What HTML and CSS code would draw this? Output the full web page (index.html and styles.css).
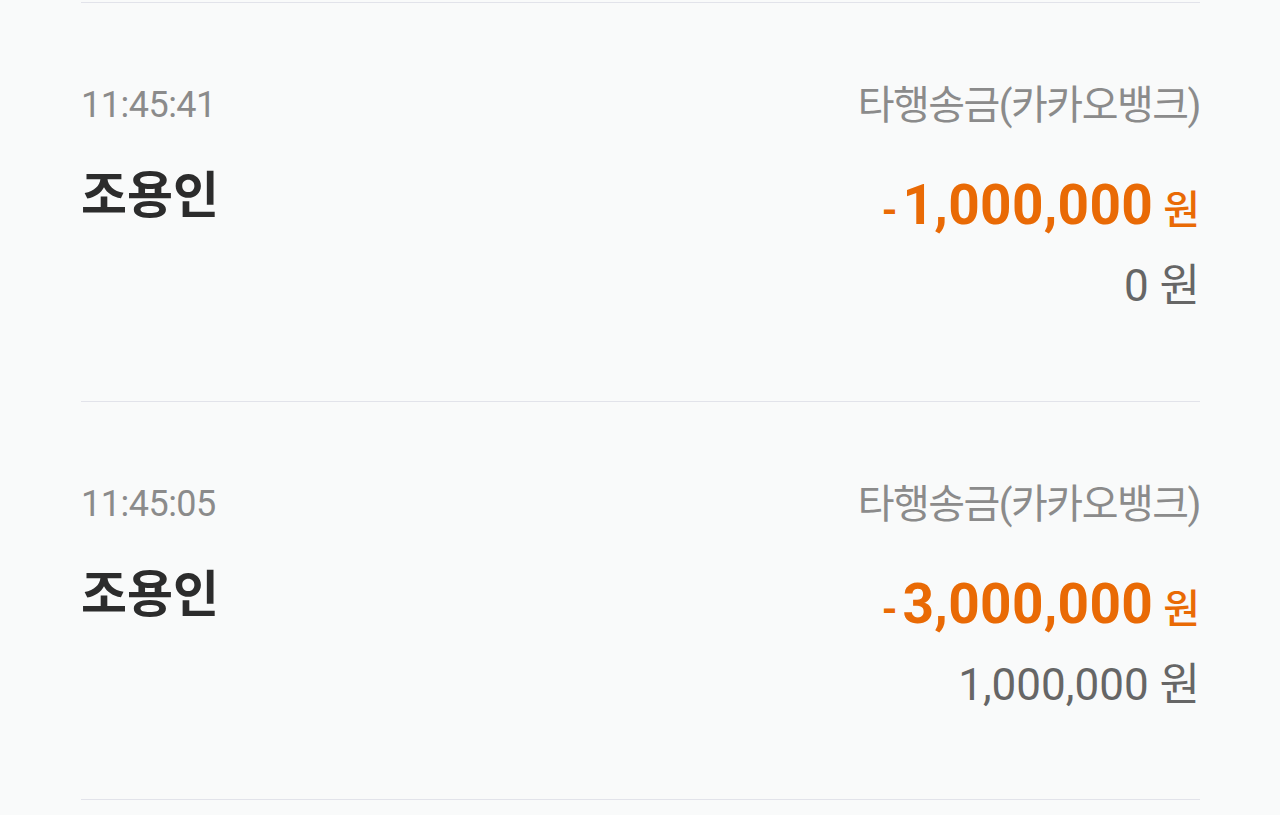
FILE: index.html
```html
<!DOCTYPE html>
<html lang="ko">
<head>
<meta charset="utf-8">
<link rel="stylesheet" href="styles.css">
</head>
<body>
<div class="list">
  <div class="item">
    <div class="left">
      <div class="time">11:45:41</div>
      <div class="name">조용인</div>
    </div>
    <div class="right">
      <div class="kind">타행송금(카카오뱅크)</div>
      <div class="amount"><span class="minus">-</span><span class="num">1,000,000</span><span class="won">원</span></div>
      <div class="balance">0 원</div>
    </div>
  </div>
  <div class="item">
    <div class="left">
      <div class="time">11:45:05</div>
      <div class="name">조용인</div>
    </div>
    <div class="right">
      <div class="kind">타행송금(카카오뱅크)</div>
      <div class="amount"><span class="minus">-</span><span class="num">3,000,000</span><span class="won">원</span></div>
      <div class="balance">1,000,000 원</div>
    </div>
  </div>
  <div class="end"></div>
</div>
</body>
</html>
```

FILE: styles.css
```css
html, body {
  margin: 0;
  padding: 0;
  background: #f9fafa;
}
body {
  font-family: Roboto, "Noto Sans CJK KR", sans-serif;
}
.list {
  padding: 2px 80px 0 81px;
}
.item {
  display: flex;
  justify-content: space-between;
  border-top: 1px solid #e2e3ea;
  height: 398.5px;
  box-sizing: border-box;
}
.end {
  border-top: 1px solid #e2e3ea;
}
.left {
  display: flex;
  flex-direction: column;
  padding-top: 84px;
}
.time {
  font-size: 36px;
  line-height: 36px;
  color: #8b8b8b;
  letter-spacing: -0.5px;
}
.name {
  margin-top: 45px;
  font-size: 50px;
  line-height: 56px;
  font-weight: 700;
  color: #2c2c2c;
}
.right {
  display: flex;
  flex-direction: column;
  align-items: flex-end;
  padding-top: 77px;
}
.kind {
  font-size: 40px;
  line-height: 52px;
  color: #8b8b8b;
  letter-spacing: -1.5px;
}
.amount {
  margin-top: 43px;
  line-height: 60px;
  color: #e96a05;
  font-weight: 700;
  display: flex;
  align-items: baseline;
}
.minus {
  font-size: 40px;
  margin-right: 5px;
}
.num {
  font-size: 55px;
  letter-spacing: 0.3px;
}
.won {
  font-size: 40px;
  margin-left: 10px;
  font-weight: 500;
}
.balance {
  margin-top: 20px;
  font-size: 44px;
  line-height: 50px;
  color: #666666;
}
```
